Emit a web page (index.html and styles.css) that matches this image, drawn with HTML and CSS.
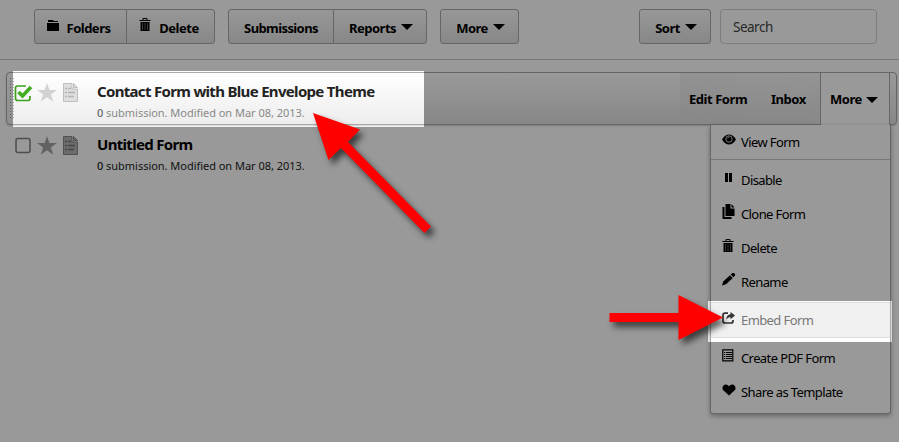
FILE: index.html
```html
<!DOCTYPE html>
<html lang="en">
<head>
<meta charset="utf-8">
<title>My Forms</title>
<link rel="stylesheet" href="styles.css">
</head>
<body>
<svg class="defs" width="0" height="0">
  <symbol id="trash" viewBox="0 0 12 14"><path d="M4 2V.5h4V2M.5 2.500h11" fill="none" stroke="currentColor"/><path d="M1.500 4h9v9h-9z"/><path d="M3.500 5v7M6 5v7M8.500 5v7" stroke="#999" stroke-width=".6"/></symbol>
  <symbol id="star" viewBox="0 0 20 19"><path d="M10 0l2.400 7H20l-6.100 4.400 2.300 7.300L10 14.300l-6.200 4.400 2.300-7.300L0 7h7.600z"/></symbol>
  <symbol id="doc" viewBox="0 0 15 19"><path d="M.5.5H9V6h5.500v12.500H.5z" stroke-width=".8"/><path d="M10.500.5l4 4h-4z" stroke-width=".8"/><path d="M2 5.500h2M5 5.500h3M2 9.500h2M5 9.500h7M2 13.500h2M5 13.500h6" stroke-width="1.500"/></symbol>
</svg>
<div class="page">
  <header class="toolbar">
    <div class="group manage">
      <button class="btn folders"><svg class="folder" width="12" height="11" viewBox="0 0 12 11"><path d="M1 0h5l1 1h4v1H1zM0 3h12v8H0z"/></svg><span>Folders</span></button>
      <button class="btn delete"><svg class="bin" width="12" height="14"><use href="#trash"/></svg><span>Delete</span></button>
    </div>
    <div class="group data">
      <button class="btn submissions"><span>Submissions</span></button>
      <button class="btn reports"><span>Reports</span><i class="caret"></i></button>
    </div>
    <div class="group extra"><button class="btn"><span>More</span><i class="caret"></i></button></div>
    <div class="group sort"><button class="btn"><span>Sort</span><i class="caret"></i></button></div>
    <div class="search">Search</div>
  </header>
  <main class="forms">
    <section class="row selected">
      <div class="grip"></div>
      <svg class="check" width="19" height="18" viewBox="0 0 19 18"><path d="M12 2H3.500Q1.500 2 1.500 4v10q0 2.500 2 2.500H14q2 0 2-2.500v-2" fill="none" stroke="#3d9f20" stroke-width="1.700"/><path d="M4.500 8l4 4L17 3" fill="none" stroke="#43ad22" stroke-width="3.600"/></svg>
      <svg class="star" width="20" height="19"><use href="#star"/></svg>
      <svg class="doc" width="15" height="19"><use href="#doc"/></svg>
      <div class="info"><h2>Contact Form with Blue Envelope Theme</h2><p><b>0</b> submission. Modified on Mar 08, 2013.</p></div>
      <nav class="actions">
        <a class="edit">Edit Form</a><a class="inbox">Inbox</a><a class="more"><span>More</span><i class="caret"></i></a>
      </nav>
      <div class="menu">
        <div class="item view"><svg width="14" height="11" viewBox="0 0 14 11"><path d="M0 5.500Q3 .5 7 .5t7 5Q11 10.500 7 10.500T0 5.500z"/><circle cx="7" cy="5" r="3.200" fill="none" stroke="#fff" stroke-width=".8"/><path d="M5.500 4.500Q6 3 7.500 3" stroke="#fff" stroke-width=".7" fill="none"/></svg><span>View Form</span></div>
        <div class="list">
          <div class="item"><svg width="14" height="10"><path d="M3 0h3v9H3zM7 0h3v9H7z"/></svg><span>Disable</span></div>
          <div class="item"><svg width="14" height="15" viewBox="0 0 14 15"><path d="M3.500 0h5v4.500h4V12h-9zM9.500 0l3 3.500h-3zM.5 3h2v10h7v2h-9z"/></svg><span>Clone Form</span></div>
          <div class="item"><svg width="12" height="14"><use href="#trash"/></svg><span>Delete</span></div>
          <div class="item"><svg width="14" height="13" viewBox="0 0 14 13"><path d="M0 12.500l1.200-4L8 2.200l2.800 2.700-6.800 6.400zM8.700 1.500L10.500 0q1-.5 2 .5t.5 2l-1.500 1.700z"/></svg><span>Rename</span></div>
          <div class="item embed"><svg width="14" height="12" viewBox="0 0 14 12"><path d="M6 1.200H3Q1 1.200 1 3v6q0 2 2 2h6q2 0 2-2V8" fill="none" stroke="#333" stroke-width="1.700"/><path d="M8.500 0l4.500 3.600-4.500 3.600V5Q6 5 4.300 7.500 4.500 2.500 8.500 2.200z" fill="#333"/></svg><span>Embed Form</span></div>
          <div class="item"><svg width="12" height="13" viewBox="0 0 12 13"><path d="M.8.8h10v11H.8z" fill="none" stroke="#000" stroke-width="1.200"/><path d="M2 3.500h1.300M4 3.500h6M2 5.500h1.300M4 5.500h6M2 7.500h1.300M4 7.500h6M2 9.500h1.300M4 9.500h6" stroke="#000"/></svg><span>Create PDF Form</span></div>
          <div class="item"><svg width="14" height="12" viewBox="0 0 14 12"><path d="M7 11.500L1.300 6.300C-.5 4.500.8.500 3.800.5 5.500.5 6.500 1.500 7 2.500 7.500 1.500 8.500.5 10.200.5c3 0 4.300 4 2.500 5.800z"/></svg><span>Share as Template</span></div>
        </div>
      </div>
    </section>
    <section class="row second">
      <div class="grip"></div>
      <svg class="check" width="19" height="18"><rect x="2" y="1.500" width="14" height="14" rx="2" fill="none" stroke="#808080" stroke-width="1.500"/></svg>
      <svg class="star" width="20" height="19"><use href="#star"/></svg>
      <svg class="doc" width="15" height="19"><use href="#doc"/></svg>
      <div class="info"><h2>Untitled Form</h2><p><b>0</b> submission. Modified on Mar 08, 2013.</p></div>
    </section>
  </main>
</div>
<svg class="callouts" width="899" height="442" viewBox="0 0 899 442">
  <path d="M0 0H899V442H0zM13 71V127H424V71zM708 301V342H892V301z" fill="#000" fill-opacity=".4" fill-rule="evenodd"/>
  <g class="arrows" fill="#f00"><path d="M313 113L360 129.500 348 142 431 226.500 424.500 233 341 148 328.500 160z"/><path d="M609.500 313H678.500V295L723 317.500 678.500 340V322H609.500z"/></g>
</svg>
</body>
</html>
```
FILE: styles.css
```css
* { box-sizing: border-box; }
body { margin: 0; width: 899px; height: 442px; overflow: hidden; position: relative; background: #fff; color: #000; font-family: "Noto Sans", sans-serif; font-size: 13px; }
.defs { position: absolute; }
svg { flex: none; fill: currentColor; }
.toolbar { display: flex; align-items: flex-start; height: 60px; padding: 9px 22px 0 34px; border-bottom: 1px solid #c8c8c8; }
.group { display: flex; height: 35px; border: 1px solid #aaa; border-radius: 3px; background: linear-gradient(#fcfcfc, #e2e2e2); }
.btn { display: flex; align-items: center; justify-content: center; flex: none; padding: 3px 0 0; border: 0; background: none; color: #000; font: bold 13px "Noto Sans", sans-serif; letter-spacing: -.5px; white-space: nowrap; }
.btn + .btn { border-left: 1px solid #aaa; }
.manage { width: 181px; margin-right: 13px; }
.folders { width: 91px; gap: 8px; padding-right: 4px; }
.delete { width: 88px; gap: 8px; padding-right: 3px; }
.folder, .bin { margin-top: -6px; }
.data { width: 199px; margin-right: 13px; }
.submissions { width: 104px; letter-spacing: -.6px; }
.reports { width: 93px; padding-left: 2px; }
.extra { width: 79px; }
.extra .btn, .sort .btn { width: 100%; padding-left: 2px; }
.sort { width: 72px; margin-left: auto; margin-right: 9px; }
.caret { flex: none; border: 6px solid transparent; border-top-color: #000; border-bottom: 0; margin: -2px 0 0 5px; }
.search { width: 157px; height: 35px; padding: 8px 12px; border: 1px solid #d0d0d0; border-radius: 4px; color: #444; font-size: 13.5px; letter-spacing: -.5px; line-height: 18px; }
.forms { padding: 12px 2px 0 6px; }
.row { position: relative; display: flex; width: 891px; height: 53px; padding-left: 2px; border: 1px solid transparent; }
.selected { border-color: #aaa; border-radius: 4px; background: linear-gradient(#fff, #ededed) 0 0 / 417px 100% no-repeat, linear-gradient(#fff, #e2e2e2); box-shadow: 0 1px 2px #0003; }
.grip { width: 6px; height: 41px; margin-top: 4px; background: radial-gradient(circle, #aaa .6px, transparent .8px) 0 0 / 3px 3px; }
.second .grip { background: none; }
.check { margin: 11px 0 0 -1px; }
.star { margin: 10px 0 0 4px; color: #d2d2d2; }
.doc { margin: 10px 0 0 6px; color: #dedede; stroke: #b4b4b4; }
.second .star { color: #a4a4a4; }
.second .doc { color: #b4b4b4; stroke: #747474; }
.info { margin: 7px 0 0 19px; white-space: nowrap; }
h2 { margin: 0; font-size: 15px; line-height: 22px; letter-spacing: -.68px; color: #222; }
.second h2 { color: #000; }
p { margin: 1px 0 0; font-size: 11px; line-height: 20px; letter-spacing: -.03px; color: #888; }
p b { font-weight: 500; color: #666; }
.second p, .second b { color: #222; }
.actions { display: flex; width: 210px; margin: 0 6px 0 auto; font-weight: bold; letter-spacing: -.45px; background: linear-gradient(90deg, #e0e0e055, #e8e8e833); }
.actions a { line-height: 53px; white-space: nowrap; }
.edit { width: 82px; padding-left: 9px; }
.inbox { width: 58px; padding-left: 9px; }
.more { display: flex; align-items: center; width: 70px; height: 52px; padding-left: 9px; background: #fff; border: solid #aaa; border-width: 0 1px; }
.more .caret { margin: 1px 0 0 4px; }
.menu { position: absolute; z-index: 2; top: 52px; left: 703px; width: 181px; height: 289px; background: #fff; border: 1px solid #aaa; border-top: 0; border-radius: 0 0 3px 3px; box-shadow: 0 2px 5px #0005; }
.item { display: flex; height: 34px; align-items: center; letter-spacing: -.6px; white-space: nowrap; }
.item svg { margin: -5px 0 0 11px; }
.item span { margin-left: 5px; }
.item svg[width="12"] + span { margin-left: 7px; }
.view { height: 35px; border-bottom: 1px solid #c8c8c8; }
.list { padding-top: 3px; }
.embed { height: 36px; margin: 3px 0; background: #f0f0f0; color: #777; border: solid #dcdcdc; border-width: 1px 0; }
.callouts { position: absolute; z-index: 5; left: 0; top: 0; pointer-events: none; }
.arrows { filter: drop-shadow(4px 5px 3px rgba(0, 0, 0, .6)); }
```
